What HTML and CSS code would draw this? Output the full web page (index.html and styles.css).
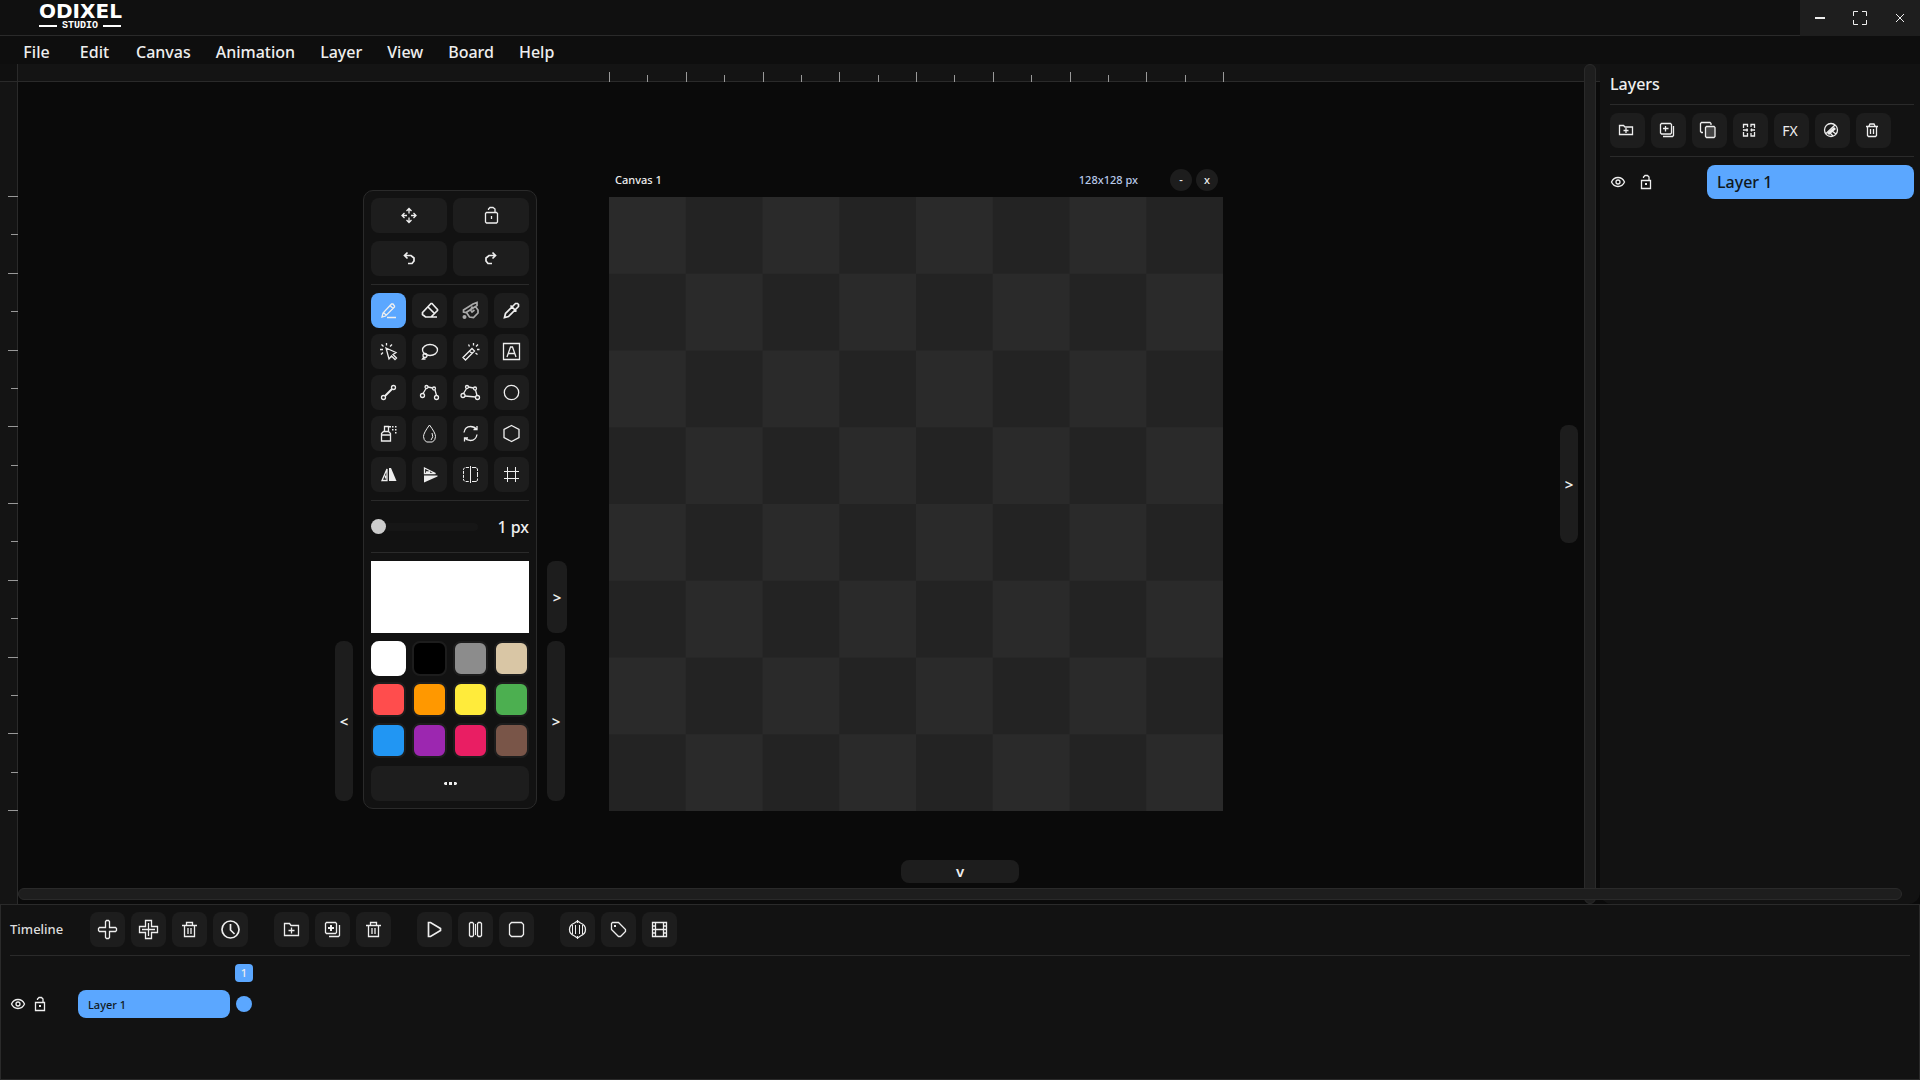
FILE: index.html
```html
<!DOCTYPE html>
<html lang="en">
<head>
<meta charset="utf-8">
<title>Odixel Studio</title>
<link rel="stylesheet" href="styles.css">
</head>
<body>
<svg class="sprite" aria-hidden="true">
  <symbol id="i-eye" viewBox="0 0 16 16"><path d="M1.500 8Q3.500 3.500 8 3.500t6.500 4.500Q12.500 12.500 8 12.500T1.500 8z"/><circle cx="8" cy="8" r="2"/></symbol>
  <symbol id="i-lock" viewBox="0 0 16 16"><path d="M3.500 6.500h9v8h-9zM5.500 4V3l1.500-1.500h2.500L11 3v3.500"/><path class="solid" d="M7 9h2v2H7z"/></symbol>
  <symbol id="i-trash" viewBox="0 0 35 35"><path d="M10 13.500h15M14.500 13v-2.500h6V13M12.500 14v10.500h10V14M16 16v6M19 16v6"/></symbol>
  <symbol id="i-folder" viewBox="0 0 35 35"><path d="M10.500 11.500h5l1.500 2h7.500v10h-14zM17.500 15.500v6M14.500 18.500h6"/></symbol>
  <symbol id="i-dup" viewBox="0 0 35 35"><path d="M11.500 10.500h9l1 1v9l-1 1h-9l-1-1v-9zM24.500 13v10.500l-1 1H14"/><path class="thick" d="M16 13v6M13 16h6"/></symbol>
</svg>

<header class="titlebar">
  <div class="logo">
    <span class="logo-name">ODIXEL</span>
    <span class="logo-sub">STUDIO</span>
  </div>
  <div class="window-controls">
    <button type="button" aria-label="Minimize"><svg viewBox="0 0 40 36"><path class="solid" d="M15 17h10v2H15z"/></svg></button>
    <button type="button" aria-label="Maximize"><svg viewBox="0 0 40 36"><path d="M13.500 16v-4.500H18M22 11.500h4.500V16M26.500 20v4.500H22M18 24.500h-4.500V20"/></svg></button>
    <button type="button" aria-label="Close"><svg viewBox="0 0 40 36"><path d="M16 14l8 8M24 14l-8 8"/></svg></button>
  </div>
</header>

<nav class="menubar">
  <button type="button">File</button>
  <button type="button">Edit</button>
  <button type="button">Canvas</button>
  <button type="button">Animation</button>
  <button type="button">Layer</button>
  <button type="button">View</button>
  <button type="button">Board</button>
  <button type="button">Help</button>
</nav>

<main class="main">
  <section class="workspace">
    <div class="corner"></div>
    <div class="ruler ruler-x"><div class="ticks"><i></i><i></i><i></i><i></i><i></i><i></i><i></i><i></i><i></i><i></i><i></i><i></i><i></i><i></i><i></i><i></i><i></i></div></div>
    <div class="ruler ruler-y"><div class="ticks"><i></i><i></i><i></i><i></i><i></i><i></i><i></i><i></i><i></i><i></i><i></i><i></i><i></i><i></i><i></i><i></i><i></i></div></div>
    <div class="stage">
      <aside class="tools" aria-label="Tools">
        <div class="pair">
          <button class="btn" type="button" aria-label="Move panel"><svg viewBox="1 0 35 35"><path d="M18 10.500v5M18 19.500v5M11 17.500h5M20 17.500h5M15.500 13l2.500-2.500 2.500 2.500M15.500 22l2.500 2.500 2.500-2.500M13.500 15L11 17.500l2.500 2.500M22.500 15l2.500 2.500-2.500 2.500"/></svg></button>
          <button class="btn" type="button" aria-label="Lock panel"><svg viewBox="1 0 35 35"><path d="M12.500 15.500l1-1h10l1 1v8.500l-1 1h-10l-1-1zM15.500 12v-1l1.500-1.500h3l2 1.500v3.500M18.500 18v3"/></svg></button>
        </div>
        <div class="pair">
          <button class="btn" type="button" aria-label="Undo"><svg viewBox="1 0 35 35"><path class="bold" d="M16.500 11.500l-3 3 3 3M14 14.500h6l3 2.500v3l-2 2.500h-4"/></svg></button>
          <button class="btn" type="button" aria-label="Redo"><svg viewBox="1 0 35 35"><path class="bold" d="M19.500 11.500l3 3-3 3M22 14.500h-6l-3 2.500v3l2 2.500h4"/></svg></button>
        </div>
        <hr>
        <div class="grid">
          <button class="btn active" type="button" aria-label="Pencil"><svg viewBox="0 0 35 35"><path d="M11 24l1-4 8.500-9h1.500l1.500 2v1l-9 9zM12.500 19.500l3 3M19 12.500l3 3M16 24.500h9"/></svg></button>
          <button class="btn" type="button" aria-label="Eraser"><svg viewBox="0 0 35 35"><path class="bold" d="M10.500 20.500v1l3 2.500h5.500l6.500-6.500v-1l-5.500-6h-1l-8.500 9zM16 14l6.500 6.500M17 24h8"/></svg></button>
          <button class="btn dim" type="button" aria-label="Bucket"><svg viewBox="0 0 35 35"><path class="bold" d="M10.500 17L20 11l4-1.500v3L13 19.500l-2.500-.5zM13.500 19.500l3 4.500 4 .5 4.500-4.500v-3l-3-4M19.500 13.500L17.500 17l1.500 2 2.500-2"/><circle class="solid" cx="11.500" cy="24" r="2"/></svg></button>
          <button class="btn" type="button" aria-label="Eyedropper"><svg viewBox="0 0 35 35"><path class="bold" d="M10.500 24.500l1-4 6.500-6.500 3 3-6.500 6.500zM16.500 12.500l6 6M18.500 13.500l3-3h2l1 1v2l-3 3"/></svg></button>
          <button class="btn" type="button" aria-label="Select"><svg viewBox="0 0 35 35"><path d="M15 14l10 4.500-3 2 3.500 3.500-1.500 1.500-3.500-3.500-2.500 3zM9 15.500h3M10.500 10.500l2 2M15.500 9v2.500M21 10.500l-2 2M10 20.500l2-2"/></svg></button>
          <button class="btn" type="button" aria-label="Lasso"><svg viewBox="0 0 35 35"><ellipse cx="18" cy="16" rx="7.500" ry="5.500"/><circle cx="13" cy="21.500" r="2"/><path d="M12 23l-1.500 2h3"/></svg></button>
          <button class="btn" type="button" aria-label="Magic wand"><svg viewBox="0 0 35 35"><path d="M10 23.500l9-9 2.500 2.500-9 9zM16.500 17l2.500 2.500M15.500 10.500l1 2M20.500 9v2.500M25 10.500l-2 2M24 15.500h2.500M22.500 19l2 1.500"/></svg></button>
          <button class="btn" type="button" aria-label="Text"><svg viewBox="0 0 35 35"><path d="M9.500 9.500h16v16h-16zM13 23l3.500-10h2L22 23M14.500 19.500h6"/></svg></button>
          <button class="btn" type="button" aria-label="Line"><svg viewBox="0 0 35 35"><circle cx="12.500" cy="22.500" r="2"/><circle cx="22.500" cy="12.500" r="2"/><path class="thick" d="M14 21l7-7"/></svg></button>
          <button class="btn" type="button" aria-label="Curve"><svg viewBox="0 0 35 35"><circle cx="10.500" cy="20.500" r="2"/><circle cx="14.500" cy="12" r="1.500"/><circle cx="22" cy="13.500" r="1.500"/><circle cx="24.500" cy="22.500" r="2"/><path d="M11 18.500l3-5M16 12l4.500 1M23 15l1.500 5.500"/></svg></button>
          <button class="btn" type="button" aria-label="Polygon"><svg viewBox="0 0 35 35"><circle cx="10" cy="20.500" r="2"/><circle cx="14" cy="12" r="1.500"/><circle cx="22" cy="13.500" r="1.500"/><circle cx="24.500" cy="22.500" r="2"/><path d="M10.500 18.500l3-5M15.500 12l5 1M22.500 15l1.500 5.500M12 21l10.500 1"/></svg></button>
          <button class="btn" type="button" aria-label="Ellipse"><svg viewBox="0 0 35 35"><circle cx="17.500" cy="17.500" r="7.200"/></svg></button>
          <button class="btn" type="button" aria-label="Spray"><svg viewBox="0 0 35 35"><path d="M10.500 17.500l2-2h5l2 2v7.500h-9zM10.500 19h9M13.500 15v-4.500h4V15"/><path class="solid" d="M18 10h2v1.500h-2zM21 10h1.500v1.500H21zM24 10h1.500v1.500H24zM21 13h1.500v1.500H21zM24 13h1.500v1.500H24zM24 16h1.500v1.500H24z"/></svg></button>
          <button class="btn" type="button" aria-label="Blur"><svg viewBox="0 0 35 35"><path class="thin" d="M17.500 9q-6 8-6 11.500t3 5.500h6q3-2 3-5.500T17.500 9zM20 17q2 4-1 7"/></svg></button>
          <button class="btn" type="button" aria-label="Rotate"><svg viewBox="0 0 35 35"><path d="M11 16.500q1-6 6.500-6 4 0 6 3M24 18.500q-1 6-6.500 6-4 0-6-3M24 10v3.500h-3.500M11.500 25.500V22H15"/></svg></button>
          <button class="btn" type="button" aria-label="Hexagon"><svg viewBox="0 0 35 35"><path d="M17.500 9.500l7.500 4v8l-7.500 4-7.500-4v-8z"/></svg></button>
          <button class="btn" type="button" aria-label="Flip horizontal"><svg viewBox="0 0 35 35"><path class="solid" d="M18 11h2l5.500 13H18z"/><path d="M16 12v11.500h-5zM14.500 21.500v-3"/></svg></button>
          <button class="btn" type="button" aria-label="Flip vertical"><svg viewBox="0 0 35 35"><path class="solid" d="M12 18.500h13.500v1L12 25.500z"/><path d="M12.500 16.500v-5.500l11 5.500zM14 15h4"/></svg></button>
          <button class="btn" type="button" aria-label="Symmetry"><svg viewBox="0 0 35 35"><path class="thin" d="M17.500 9v17M19 10.500h4l1.500 1.500v2M24.500 15v5M24.500 21.500v2L23 24.500h-4"/><path class="thin dash" d="M16 10.500h-4L10.500 12v11L12 24.500h4"/></svg></button>
          <button class="btn" type="button" aria-label="Grid"><svg viewBox="0 0 35 35"><path class="thin" d="M13.500 10v15M21.500 10v15M10 14.500h15M10 21.500h15"/></svg></button>
        </div>
        <hr>
        <div class="size-row">
          <input id="size" class="slider" type="range" min="1" max="64" value="1" aria-label="Brush size">
          <label for="size">1 px</label>
        </div>
        <hr>
        <button class="current-color" type="button" aria-label="Current color"></button>
        <div class="grid">
          <button class="swatch c-white" type="button" aria-label="White"></button>
          <button class="swatch c-black" type="button" aria-label="Black"></button>
          <button class="swatch c-gray" type="button" aria-label="Gray"></button>
          <button class="swatch c-tan" type="button" aria-label="Tan"></button>
          <button class="swatch c-red" type="button" aria-label="Red"></button>
          <button class="swatch c-orange" type="button" aria-label="Orange"></button>
          <button class="swatch c-yellow" type="button" aria-label="Yellow"></button>
          <button class="swatch c-green" type="button" aria-label="Green"></button>
          <button class="swatch c-blue" type="button" aria-label="Blue"></button>
          <button class="swatch c-purple" type="button" aria-label="Purple"></button>
          <button class="swatch c-pink" type="button" aria-label="Pink"></button>
          <button class="swatch c-brown" type="button" aria-label="Brown"></button>
        </div>
        <button class="btn" type="button" aria-label="More colors"><svg viewBox="1 0 35 35"><path class="solid" d="M12 17l1-1h2v3h-2l-1-1zM17 16h3v3h-3zM22 16h2l1 1v1l-1 1h-2z"/></svg></button>
        <button class="tab tab-left" type="button">&lt;</button>
        <button class="tab tab-right" type="button">&gt;</button>
        <button class="tab tab-color" type="button">&gt;</button>
      </aside>

      <article class="board">
        <header class="board-head">
          <span class="board-name">Canvas 1</span>
          <span class="board-size">128x128 px</span>
          <button type="button">-</button>
          <button type="button">x</button>
        </header>
        <div class="checker" role="img" aria-label="Canvas 1"></div>
      </article>
      <button class="tab tab-edge" type="button">&gt;</button>
    </div>
  </section>

  <aside class="layers">
    <h2>Layers</h2>
    <hr>
    <div class="row">
      <button class="btn" type="button" aria-label="New folder"><svg viewBox="0 0 35 35"><path d="M9.500 12.500h4l1.500 1.500h7.500v7.500h-13zM16 15v5M13.500 17.500h5"/></svg></button>
      <button class="btn" type="button" aria-label="New layer"><svg viewBox="0 0 35 35"><path d="M10.500 10.500h9l1 1v8.500l-1 1h-9l-1-1v-8.500zM22.500 13v9.500l-1 1H12M14.500 13v5.500M12 15.500h5.500"/></svg></button>
      <button class="btn" type="button" aria-label="Duplicate"><svg viewBox="0 0 35 35"><path d="M11 19.500H9.500l-1-1v-8l1-1h8.500l1 1V12"/><path class="shade" d="M13.500 14.500l1-1h7.500l1 1v9l-1 1h-7.500l-1-1z"/></svg></button>
      <button class="btn" type="button" aria-label="Merge"><svg viewBox="0 0 35 35"><path d="M14.500 14v-2.500h-4V15M10.500 19v4h4v-3M18 14v-2.500h3.500V15M21.500 19v4H18v-3M10 17h5M17.500 17H22M14 15.500v3M18.500 15.500v3"/></svg></button>
      <button class="btn fx" type="button">FX</button>
      <button class="btn" type="button" aria-label="Mask"><svg viewBox="0 0 35 35"><circle cx="16" cy="17" r="6.500"/><path d="M11 20.500l9-8.500M17 18l4 3M15 20l3 3"/><path class="solid" d="M12 20l7-6 2 2-7 6z"/></svg></button>
      <button class="btn" type="button" aria-label="Delete layer"><svg viewBox="0 0 35 35"><path d="M10 13.500h12M13 13l1-2h4l1 2M11.500 14v8.500l1 1h7l1-1V14M14.500 16v5M17.500 16v5"/></svg></button>
    </div>
    <hr>
    <div class="layer-row">
      <button class="mini" type="button" aria-label="Visibility"><svg><use href="#i-eye"/></svg></button>
      <button class="mini" type="button" aria-label="Lock"><svg><use href="#i-lock"/></svg></button>
      <input class="layer-name" type="text" value="Layer 1" aria-label="Layer name">
    </div>
  </aside>
  <button class="tab tab-bottom" type="button">v</button>
  <div class="scroll scroll-y"></div>
  <div class="scroll scroll-x"></div>
</main>

<section class="timeline">
  <div class="timeline-head">
    <h2>Timeline</h2>
    <div class="row">
      <button class="btn" type="button" aria-label="Add frame"><svg viewBox="0 0 35 35"><path d="M16.500 8.500h2l1 1v6h6l1 1v2l-1 1h-6v6l-1 1h-2l-1-1v-6h-6l-1-1v-2l1-1h6v-6z"/></svg></button>
      <button class="btn" type="button" aria-label="Duplicate frame"><svg viewBox="0 0 35 35"><path d="M14.500 8.500h6v6h6v6h-6v6h-6v-6h-6v-6h6zM17.500 11v13M11 17.500h13"/></svg></button>
      <button class="btn" type="button" aria-label="Delete frame"><svg><use href="#i-trash"/></svg></button>
      <button class="btn" type="button" aria-label="Frame duration"><svg viewBox="0 0 35 35"><circle class="bold" cx="17.500" cy="17.500" r="8.500"/><path class="bold" d="M17.500 12v6l4 4"/></svg></button>
    </div>
    <div class="row">
      <button class="btn" type="button" aria-label="New folder"><svg><use href="#i-folder"/></svg></button>
      <button class="btn" type="button" aria-label="New layer"><svg><use href="#i-dup"/></svg></button>
      <button class="btn" type="button" aria-label="Delete layer"><svg><use href="#i-trash"/></svg></button>
    </div>
    <div class="row">
      <button class="btn" type="button" aria-label="Play"><svg viewBox="0 0 35 35"><path class="bold" d="M11.500 10.500h2l10 6v2l-10 6h-2z"/></svg></button>
      <button class="btn" type="button" aria-label="Pause"><svg viewBox="0 0 35 35"><path d="M12.500 10.500h2l1 1v12l-1 1h-2l-1-1v-12zM20.500 10.500h2l1 1v12l-1 1h-2l-1-1v-12z"/><path class="thin" d="M17.500 12v11"/></svg></button>
      <button class="btn" type="button" aria-label="Stop"><svg viewBox="0 0 35 35"><path d="M12.500 10.500h10l2 2v10l-2 2h-10l-2-2v-10z"/></svg></button>
    </div>
    <div class="row">
      <button class="btn" type="button" aria-label="Onion skin"><svg viewBox="0 0 35 35"><path d="M17.500 9l3 2q5 2 5 6.500t-5 6.500l-3 2-3-2q-5-2-5-6.500t5-6.500z"/><path class="thin" d="M12.500 13v9M15.500 13v9M19.500 13v9M22.500 13v9M17.500 8v3M17.500 24v3"/></svg></button>
      <button class="btn" type="button" aria-label="Tag"><svg viewBox="0 0 35 35"><path d="M11.500 10.500h6l7 7v2l-5 5h-2l-7-7v-6z"/><path class="solid" d="M13 13h2v2h-2z"/></svg></button>
      <button class="btn" type="button" aria-label="Export"><svg viewBox="0 0 35 35"><path d="M10.500 10.500h14v14h-14zM13.500 10v15M21.500 10v15M13.500 17.500h8M10 14h3.500M10 17.500h3.500M10 21h3.500M21.500 14H25M21.500 17.500H25M21.500 21H25"/></svg></button>
    </div>
  </div>
  <hr>
  <div class="frames-head"><span class="frame-no">1</span></div>
  <div class="track">
    <button class="mini" type="button" aria-label="Visibility"><svg><use href="#i-eye"/></svg></button>
    <button class="mini" type="button" aria-label="Lock"><svg><use href="#i-lock"/></svg></button>
    <input class="layer-name" type="text" value="Layer 1" aria-label="Timeline layer name">
    <button class="key" type="button" aria-label="Keyframe 1"></button>
  </div>
</section>
</body>
</html>
```
FILE: styles.css
```css
:root {
  --bg: #0a0a0a;
  --panel: #121212;
  --raised: #1d1d1d;
  --line: #2a2a2a;
  --text: #eeeeee;
  --accent: #5ba7ff;
}

* { box-sizing: border-box; }

body {
  margin: 0;
  height: 100vh;
  display: grid;
  grid-template-rows: 36px 28px 1fr 176px;
  background: var(--bg);
  color: var(--text);
  font: 500 16px/24px "Noto Sans", sans-serif;
  overflow: hidden;
}

button, input { font: inherit; color: inherit; }

button {
  border: 0;
  padding: 0;
  background: none;
  display: flex;
  align-items: center;
  justify-content: center;
}

h2 { margin: 0; font-size: 16px; font-weight: 500; line-height: 24px; }
hr { margin: 0; border: 0; height: 1px; background: var(--line); }

svg {
  fill: none;
  stroke: currentColor;
  stroke-width: 1.3;
}
.sprite { display: none; }
.solid { fill: currentColor; stroke: none; }
.shade { fill: #444444; }
.thin { stroke-width: 1; }
.bold { stroke-width: 1.7; }
.thick { stroke-width: 2; }
.dash { stroke-dasharray: 3 1; }

/* Title bar */
.titlebar {
  display: flex;
  justify-content: space-between;
  background: #101010;
  border-bottom: 1px solid var(--line);
}
.logo {
  width: 82px;
  margin-left: 39px;
  padding-top: 3px;
  color: #ffffff;
}
.logo-name {
  display: block;
  font: bold 20px/17px "DejaVu Sans", sans-serif;
}
.logo-sub {
  display: flex;
  align-items: center;
  justify-content: space-between;
  font: bold 10px/12px "Liberation Mono", monospace;
}
.logo-sub::before, .logo-sub::after {
  content: "";
  width: 18px;
  height: 2px;
  background: currentColor;
}
.window-controls { display: flex; height: 36px; background: #1e1e1e; }
.window-controls svg { width: 40px; height: 36px; stroke-width: 1; }

/* Menu */
.menubar {
  display: flex;
  gap: 1px;
  padding: 0 8px;
  background: #0e0e0e;
}
.menubar button { min-width: 57px; padding: 0 12px; line-height: 32px; height: 32px; }

/* Workspace */
.main {
  position: relative;
  display: grid;
  grid-template-columns: 1fr 320px;
  min-height: 0;
}
.workspace {
  display: grid;
  grid-template: 18px 1fr / 18px 1fr;
  min-height: 0;
}
.corner {
  background: #101010;
  border-right: 1px solid var(--line);
  border-bottom: 1px solid var(--line);
}
.ruler { display: flex; background: #141414; min-height: 0; }
.ruler-x { border-bottom: 1px solid var(--line); padding-left: 591px; }
.ruler-y { border-right: 1px solid var(--line); padding-top: 114px; }
.ticks { display: flex; justify-content: space-between; }
.ticks i { background: #999999; }
.ruler-x .ticks { width: 615px; height: 18px; align-items: flex-end; }
.ruler-x i { width: 1px; height: 10px; }
.ruler-x i:nth-child(even) { height: 7px; }
.ruler-y .ticks { flex-direction: column; height: 615px; width: 18px; flex-shrink: 0; align-items: flex-end; }
.ruler-y i { height: 1px; width: 10px; }
.ruler-y i:nth-child(even) { width: 7px; }

.stage { position: relative; min-height: 0; }

.btn {
  min-width: 35px;
  height: 35px;
  border-radius: 8px;
  background: var(--raised);
}
.btn svg { width: 35px; height: 35px; }
.btn.active { background: var(--accent); }
.btn.dim { color: #aaaaaa; }
.fx { padding-right: 3px; font-size: 14px; font-weight: 400; }
.row { display: flex; gap: 6px; }

/* Floating tool panel */
.tools {
  position: absolute;
  left: 345px;
  top: 108px;
  width: 174px;
  padding: 7px;
  display: flex;
  flex-direction: column;
  gap: 8px;
  background: var(--panel);
  border: 1px solid var(--line);
  border-radius: 10px;
}
.pair { display: grid; grid-template-columns: 1fr 1fr; gap: 6px; }
.grid { display: grid; grid-template-columns: repeat(4, 35px); gap: 6px; }
.size-row {
  height: 35px;
  display: flex;
  align-items: center;
  justify-content: space-between;
}
.slider { width: 107px; height: 16px; margin: 0; appearance: none; background: none; }
.slider::-webkit-slider-runnable-track { height: 8px; border-radius: 4px; background: #161616; }
.slider::-webkit-slider-thumb {
  appearance: none;
  width: 15px;
  height: 15px;
  margin-top: -4px;
  border-radius: 50%;
  background: #cccccc;
}
.current-color { height: 72px; background: #ffffff; }
.swatch { height: 35px; border: 2px solid var(--raised); border-radius: 8px; }
.c-white { background: #ffffff; border-color: #ffffff; }
.c-black { background: #000000; }
.c-gray { background: #8c8c8c; }
.c-tan { background: #d9c6a5; }
.c-red { background: #ff4d4d; }
.c-orange { background: #ff9800; }
.c-yellow { background: #ffeb3b; }
.c-green { background: #4caf50; }
.c-blue { background: #2196f3; }
.c-purple { background: #9c27b0; }
.c-pink { background: #e91e63; }
.c-brown { background: #795548; }

.tab {
  position: absolute;
  width: 18px;
  height: 160px;
  padding-bottom: 1px;
  background: var(--raised);
  border-radius: 8px;
  font-size: 15px;
  font-weight: 600;
}
.tab-left { right: calc(100% + 11px); bottom: 7px; }
.tab-right { left: calc(100% + 11px); bottom: 7px; }
.tab-color { left: calc(100% + 11px); top: 370px; width: 20px; height: 72px; }
.tab-edge { right: 22px; top: calc(50% - 68px); height: 118px; }
.tab-bottom { left: calc(50% - 59px); bottom: 21px; width: 118px; height: 23px; }

/* Canvas window */
.board { position: absolute; left: 591px; top: 87px; width: 614px; }
.board-head {
  display: flex;
  align-items: center;
  gap: 4px;
  height: 28px;
  padding: 0 5px 6px 6px;
  font-size: 11px;
}
.board-name { flex: 1; }
.board-size { color: #b8c8e8; margin-right: 28px; }
.board-head button {
  width: 22px;
  height: 22px;
  border-radius: 50%;
  background: var(--raised);
}
.checker {
  aspect-ratio: 1;
  background: repeating-conic-gradient(#232323 0 25%, #2a2a2a 0 50%) 0 0 / 25% 25%;
}

.scroll {
  position: absolute;
  background: #1e1e1e;
  border: 1px solid var(--line);
  border-radius: 6px;
}
.scroll-x { left: 18px; right: 18px; bottom: 4px; height: 12px; }
.scroll-y { right: 324px; top: 0; bottom: 0; width: 12px; }

/* Layers panel */
.layers {
  display: flex;
  flex-direction: column;
  gap: 8px;
  padding: 8px 6px 8px 10px;
  background: var(--panel);
  border-radius: 0 0 12px 12px;
}
.layer-row, .track { display: flex; align-items: center; }
.mini { width: 16px; height: 16px; }
.mini svg { width: 16px; height: 16px; }
.layer-row { gap: 12px; }
.layer-name {
  min-width: 0;
  height: 34px;
  border: 0;
  border-radius: 8px;
  padding: 0 10px;
  background: var(--accent);
  color: #101820;
}
.layer-row .layer-name { flex: 1; margin-left: 41px; }

/* Timeline */
.timeline {
  display: flex;
  flex-direction: column;
  gap: 8px;
  padding: 7px 9px;
  background: var(--panel);
  border: 1px solid var(--line);
}
.timeline-head { display: flex; gap: 26px; align-items: center; }
.timeline h2 { width: 54px; padding-bottom: 1px; font-size: 13px; color: #dddddd; }
.frames-head { display: flex; padding-left: 225px; }
.frame-no {
  width: 18px;
  height: 18px;
  border-radius: 4px;
  background: var(--accent);
  font-size: 11px;
  line-height: 18px;
  text-align: center;
}
.track { gap: 6px; }
.track .layer-name { width: 152px; height: 28px; margin-left: 24px; font-size: 11px; }
.key { width: 16px; height: 16px; border-radius: 50%; background: var(--accent); }
```
